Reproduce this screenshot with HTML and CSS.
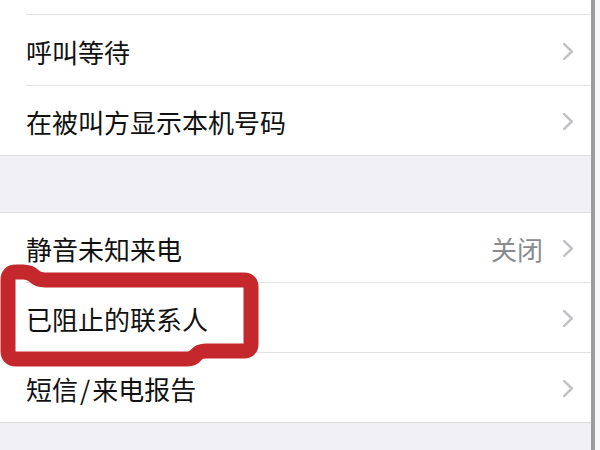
FILE: index.html
```html
<!DOCTYPE html>
<html lang="zh-CN">
<head>
<meta charset="utf-8">
<link rel="stylesheet" href="styles.css">
</head>
<body>
<div class="screen">
  <div class="content">
    <div class="section first">
      <div class="row stub"><div class="cell"></div></div>
      <div class="row tall"><div class="cell"><span class="label">呼叫等待</span><span class="chev"><svg viewBox="0 0 10 17" width="10" height="17"><polyline points="1.2,1.2 8.8,8.5 1.2,15.8"/></svg></span></div></div>
      <div class="row last"><div class="cell"><span class="label">在被叫方显示本机号码</span><span class="chev"><svg viewBox="0 0 10 17" width="10" height="17"><polyline points="1.2,1.2 8.8,8.5 1.2,15.8"/></svg></span></div></div>
    </div>
    <div class="gap"></div>
    <div class="section">
      <div class="row"><div class="cell"><span class="label">静音未知来电</span><span class="value">关闭</span><span class="chev"><svg viewBox="0 0 10 17" width="10" height="17"><polyline points="1.2,1.2 8.8,8.5 1.2,15.8"/></svg></span></div></div>
      <div class="row"><div class="cell"><span class="label">已阻止的联系人</span><span class="chev"><svg viewBox="0 0 10 17" width="10" height="17"><polyline points="1.2,1.2 8.8,8.5 1.2,15.8"/></svg></span></div></div>
      <div class="row last"><div class="cell"><span class="label">短信<span class="slash">/</span>来电报告</span><span class="chev"><svg viewBox="0 0 10 17" width="10" height="17"><polyline points="1.2,1.2 8.8,8.5 1.2,15.8"/></svg></span></div></div>
    </div>
    <div class="tail"></div>
  </div>
  <div class="edge"></div>
  <div class="margin"></div>
  <svg class="mark" viewBox="0 0 600 450" width="600" height="450">
    <path d="M 8 290 L 8 351 Q 8 359 16 359 L 187 359 Q 193 359 196 355 Q 199 351 206 351 L 244 351 Q 251 351 251 344 L 251 287 Q 251 280 244 280 L 45 280 Q 38 280 34 276 Q 30 272 23 272 L 16 272 Q 8 272 8 280 Z"/>
  </svg>
</div>
</body>
</html>
```

FILE: styles.css
```css
html, body {
  margin: 0;
  padding: 0;
  background: #ffffff;
}
.screen {
  position: relative;
  width: 600px;
  height: 450px;
  overflow: hidden;
  display: flex;
  font-family: "Noto Sans CJK SC", "Noto Sans", sans-serif;
}
.content {
  width: 591px;
  display: flex;
  flex-direction: column;
  background: #f0f0f5;
}
.edge {
  width: 4px;
  background: #9c9c9e;
}
.margin {
  width: 5px;
  background: #f7f7f9;
}
.section {
  background: #ffffff;
  border-top: 1px solid #dcdce0;
  border-bottom: 1px solid #dcdce0;
}
.section.first {
  border-top: none;
}
.row {
  padding-left: 26px;
}
.cell {
  height: 69px;
  display: flex;
  align-items: center;
  border-bottom: 1px solid #e2e2e6;
  padding-right: 18px;
}
.row.stub .cell {
  height: 14px;
}
.row.tall .cell {
  height: 70px;
}
.row.last .cell {
  border-bottom: none;
}
.label {
  flex: 1;
  font-size: 26px;
  color: #111111;
  line-height: 1;
  padding-top: 3px;
}
.slash {
  margin: 0 2px;
}
.value {
  font-size: 26px;
  color: #8a8a8e;
  line-height: 1;
  padding-top: 3px;
  margin-right: 20px;
}
.chev {
  display: flex;
  align-items: center;
  padding-top: 2px;
}
.chev svg polyline {
  fill: none;
  stroke: #c2c2c6;
  stroke-width: 2.5;
  stroke-linecap: round;
  stroke-linejoin: round;
}
.gap {
  height: 56px;
}
.tail {
  flex: 1;
}
.mark {
  position: absolute;
  left: 0;
  top: 0;
}
.mark path {
  fill: none;
  stroke: #c4272c;
  stroke-width: 15;
  stroke-linejoin: round;
}
```
